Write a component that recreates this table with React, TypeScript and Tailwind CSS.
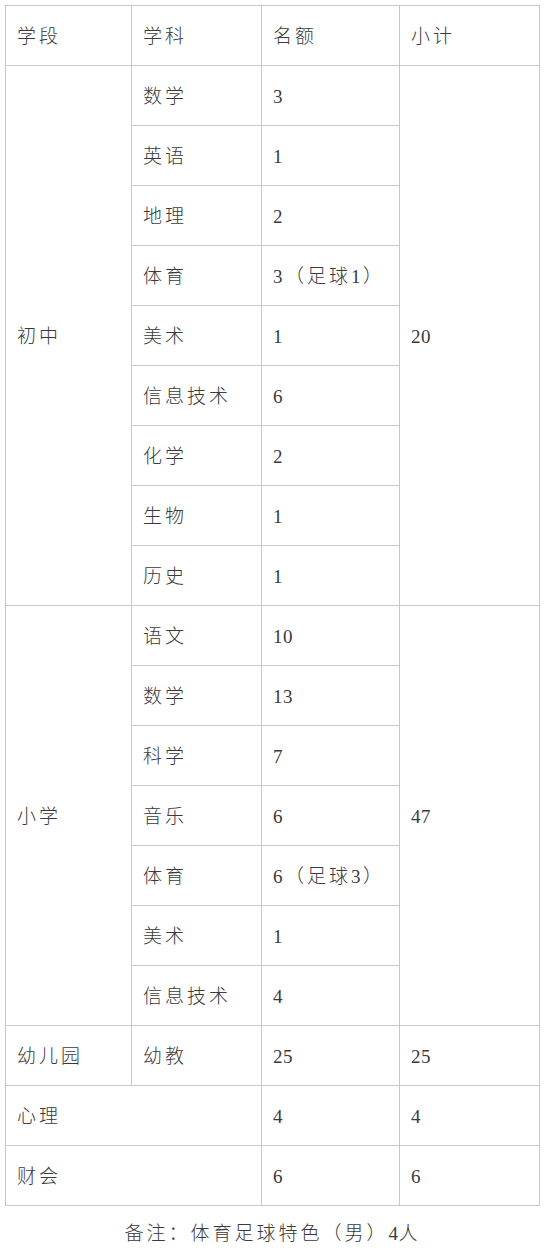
import React from 'react';

type Row = { stage?: string; stageSpan?: number; subject?: string; quota: string; total?: string; merged?: boolean };

const ROWS: Row[] = [
  { stage: '初中', stageSpan: 9, subject: '数学', quota: '3', total: '20' },
  { subject: '英语', quota: '1' },
  { subject: '地理', quota: '2' },
  { subject: '体育', quota: '3（足球1）' },
  { subject: '美术', quota: '1' },
  { subject: '信息技术', quota: '6' },
  { subject: '化学', quota: '2' },
  { subject: '生物', quota: '1' },
  { subject: '历史', quota: '1' },
  { stage: '小学', stageSpan: 7, subject: '语文', quota: '10', total: '47' },
  { subject: '数学', quota: '13' },
  { subject: '科学', quota: '7' },
  { subject: '音乐', quota: '6' },
  { subject: '体育', quota: '6（足球3）' },
  { subject: '美术', quota: '1' },
  { subject: '信息技术', quota: '4' },
  { stage: '幼儿园', stageSpan: 1, subject: '幼教', quota: '25', total: '25' },
  { stage: '心理', merged: true, quota: '4', total: '4' },
  { stage: '财会', merged: true, quota: '6', total: '6' },
];

const cell = 'border border-[#c8c8c8] pl-[11px] pr-2 pt-[4px] align-middle text-left font-light';

// digits sit tighter than the CJK glyphs in the source table
const Txt = ({ s }: { s: string }) => (
  <>
    {s.split(/(\d+)/).map((part, i) =>
      /^\d+$/.test(part) ? (
        <span key={i} className="tracking-[0.5px] mr-[2px]">{part}</span>
      ) : (
        <React.Fragment key={i}>{part}</React.Fragment>
      ),
    )}
  </>
);

const App: React.FC = () => {
  return (
    <div
      className="w-[545px] min-h-[1260px] bg-white text-[#3a3a3a] text-[19px] tracking-[3px]"
      style={{ fontFamily: '"Liberation Serif", "Noto Sans CJK SC", serif' }}
    >
      <div className="pt-[5px] pl-[5px]">
        <table className="border-collapse table-fixed w-[534px]">
          <colgroup>
            <col className="w-[126px]" />
            <col className="w-[130px]" />
            <col className="w-[138px]" />
            <col className="w-[140px]" />
          </colgroup>
          <tbody>
            <tr className="h-[60px]">
              <td className={cell}>学段</td>
              <td className={cell}>学科</td>
              <td className={cell}>名额</td>
              <td className={cell}>小计</td>
            </tr>
            {ROWS.map((r, i) => (
              <tr key={i} className="h-[60px]">
                {r.merged ? (
                  <td className={cell} colSpan={2}>{r.stage}</td>
                ) : (
                  <>
                    {r.stage && (
                      <td className={cell} rowSpan={r.stageSpan}>{r.stage}</td>
                    )}
                    <td className={cell}>{r.subject}</td>
                  </>
                )}
                <td className={cell}><Txt s={r.quota} /></td>
                {r.total && (
                  <td className={cell} rowSpan={r.merged ? 1 : r.stageSpan}><Txt s={r.total} /></td>
                )}
              </tr>
            ))}
          </tbody>
        </table>
        <div className="pr-[5px] pt-[14px] text-center font-light">
          备注：体育足球特色（男）<span className="tracking-[0.5px]">4</span>人
        </div>
      </div>
    </div>
  );
};

export default App;
